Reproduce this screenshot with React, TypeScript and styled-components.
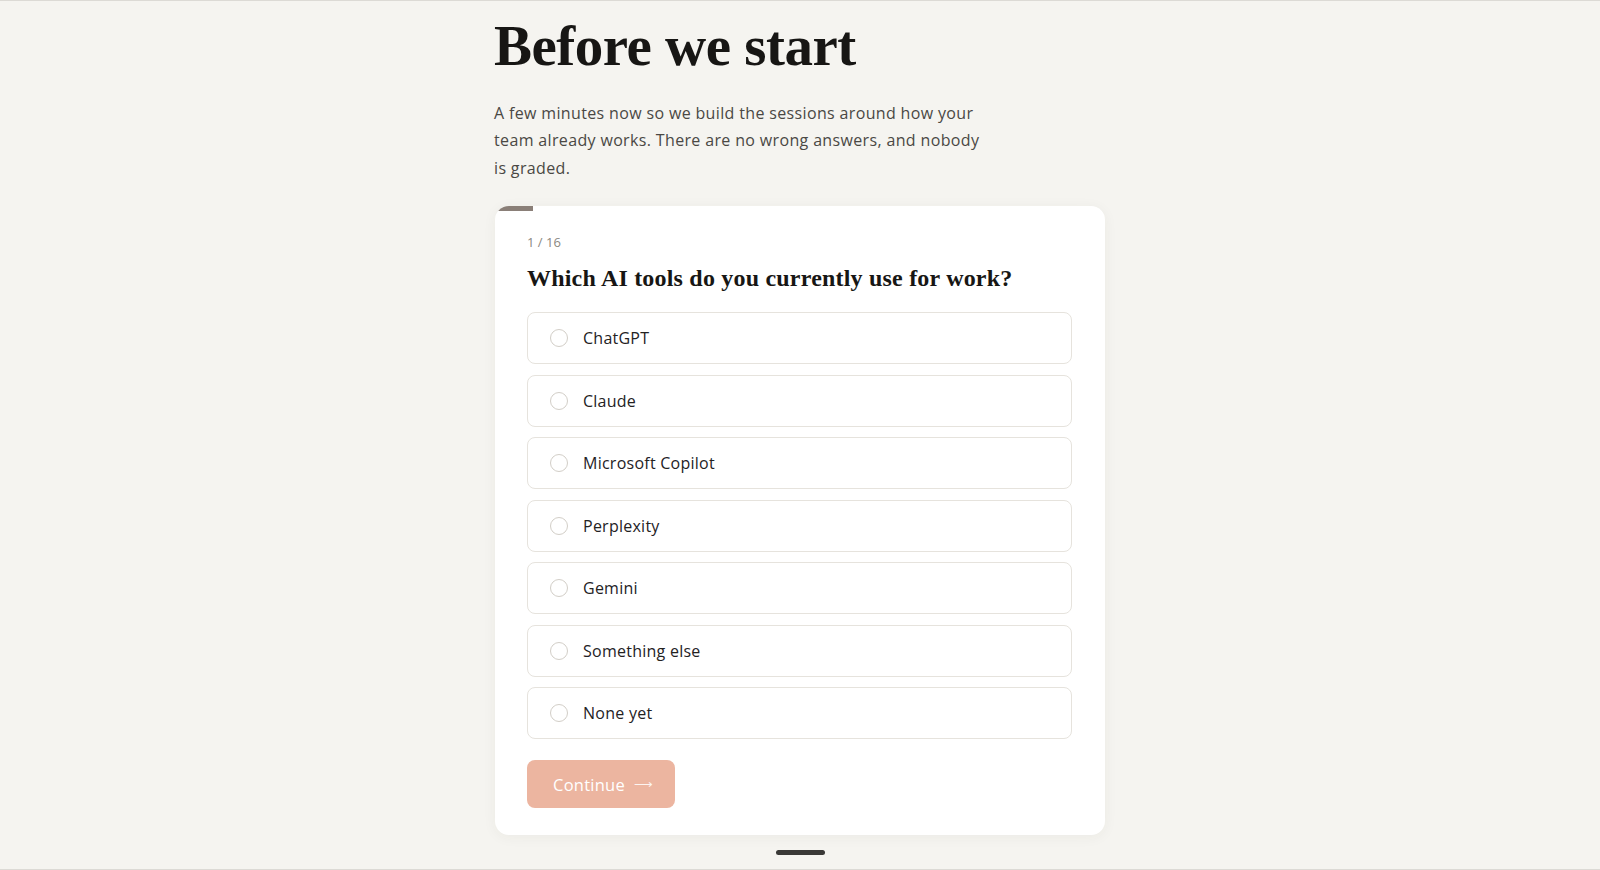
import React, { useState } from "react";
import styled, { createGlobalStyle } from "styled-components";

const GlobalStyle = createGlobalStyle`
  html, body {
    margin: 0;
    padding: 0;
    background: #f5f4f0;
  }
  body {
    font-family: "Open Sans", "Liberation Sans", sans-serif;
    color: #1c1b19;
    border-top: 1px solid #dcdad5;
    border-bottom: 1px solid #dcdad5;
    height: 868px;
    overflow: hidden;
  }
`;

const Page = styled.main`
  width: 612px;
  margin: 0 auto;
  padding-top: 14px;
  display: flex;
  flex-direction: column;
`;

const Title = styled.h1`
  margin: 0;
  font-family: "Liberation Serif", "DejaVu Serif", serif;
  font-weight: 700;
  font-size: 57px;
  line-height: 1.1;
  letter-spacing: -0.5px;
  color: #171614;
`;

const Lede = styled.p`
  margin: 22px 0 0;
  max-width: 490px;
  font-size: 16px;
  line-height: 27.5px;
  letter-spacing: 0.35px;
  color: #4a4844;
`;

const Card = styled.section`
  position: relative;
  margin-top: 24px;
  margin-left: 1px;
  width: 610px;
  box-sizing: border-box;
  padding: 26px 33px 27px 32px;
  background: #ffffff;
  border-radius: 14px;
  overflow: hidden;
  box-shadow: 0 2px 14px rgba(60, 50, 40, 0.05);
`;

const Progress = styled.div`
  position: absolute;
  top: 0;
  left: 0;
  height: 5px;
  background: #8a7f78;
`;

const Counter = styled.div`
  font-size: 13px;
  color: #8b8882;
  line-height: 20px;
`;

const Question = styled.h2`
  margin: 11px 0 19px;
  font-family: "Liberation Serif", "DejaVu Serif", serif;
  font-weight: 700;
  font-size: 24px;
  line-height: 30px;
  letter-spacing: 0.2px;
  color: #171614;
`;

const Options = styled.div`
  display: flex;
  flex-direction: column;
  gap: 10.5px;
`;

const Option = styled.button<{ $selected: boolean }>`
  display: flex;
  align-items: center;
  gap: 15px;
  height: 52px;
  padding: 0 22px;
  box-sizing: border-box;
  width: 100%;
  background: #ffffff;
  border: 1px solid ${(p) => (p.$selected ? "#8a7f78" : "#e6e3dd")};
  border-radius: 8px;
  font-family: inherit;
  font-size: 16px;
  letter-spacing: 0.25px;
  color: #24221f;
  text-align: left;
  cursor: pointer;
`;

const Radio = styled.span<{ $selected: boolean }>`
  width: 18px;
  height: 18px;
  box-sizing: border-box;
  border-radius: 50%;
  border: 1.5px solid #d2cec7;
  background: ${(p) => (p.$selected ? "#8a7f78" : "transparent")};
  flex-shrink: 0;
`;

const ContinueButton = styled.button`
  margin-top: 21px;
  align-self: flex-start;
  display: inline-flex;
  align-items: center;
  gap: 9px;
  width: 148px;
  height: 48px;
  padding: 0 0 0 26px;
  border: none;
  border-radius: 8px;
  background: #ecb5a0;
  color: #ffffff;
  font-family: inherit;
  font-size: 16.5px;
  letter-spacing: 0.25px;
  cursor: default;
`;

const Arrow = styled.span`
  font-size: 13px;
  opacity: 0.85;
`;

const Handle = styled.div`
  align-self: center;
  margin-top: 15px;
  width: 49px;
  height: 5px;
  border-radius: 3px;
  background: #3a3937;
`;

const tools = [
  "ChatGPT",
  "Claude",
  "Microsoft Copilot",
  "Perplexity",
  "Gemini",
  "Something else",
  "None yet",
];

const App = (): JSX.Element => {
  const [picked, setPicked] = useState<string[]>([]);

  const toggle = (tool: string) => {
    setPicked((prev) =>
      prev.includes(tool) ? prev.filter((t) => t !== tool) : [...prev, tool]
    );
  };

  return (
    <>
      <GlobalStyle />
      <Page>
        <Title>Before we start</Title>
        <Lede>
          A few minutes now so we build the sessions around how your team
          already works. There are no wrong answers, and nobody is graded.
        </Lede>
        <Card>
          <Progress style={{ width: `${(1 / 16) * 100}%` }} />
          <Counter>1 / 16</Counter>
          <Question>Which AI tools do you currently use for work?</Question>
          <Options>
            {tools.map((tool) => (
              <Option
                key={tool}
                $selected={picked.includes(tool)}
                onClick={() => toggle(tool)}
              >
                <Radio $selected={picked.includes(tool)} />
                {tool}
              </Option>
            ))}
          </Options>
          <ContinueButton>
            Continue <Arrow>⟶</Arrow>
          </ContinueButton>
        </Card>
        <Handle />
      </Page>
    </>
  );
};

export default App;
